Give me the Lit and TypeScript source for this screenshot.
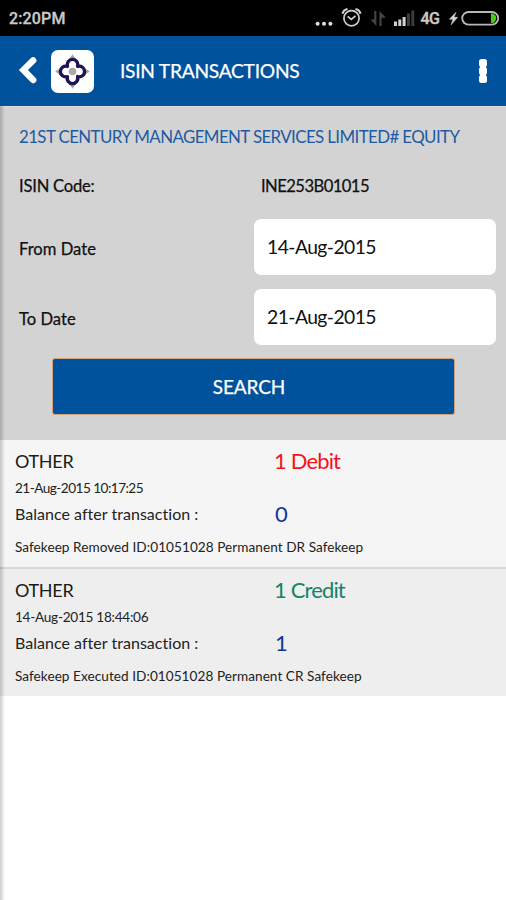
import { LitElement, html, css, svg } from "lit";
import { customElement, property } from "lit/decorators.js";

interface Transaction {
  kind: string;
  time: string;
  amount: string;
  tone: "debit" | "credit";
  balance: string;
  note: string;
}

const TRANSACTIONS: Transaction[] = [
  { kind: "OTHER", time: "21-Aug-2015 10:17:25", amount: "1 Debit", tone: "debit", balance: "0", note: "Safekeep Removed ID:01051028 Permanent DR Safekeep" },
  { kind: "OTHER", time: "14-Aug-2015 18:44:06", amount: "1 Credit", tone: "credit", balance: "1", note: "Safekeep Executed ID:01051028 Permanent CR Safekeep" },
];

@customElement("status-bar")
class StatusBar extends LitElement {
  static styles = css`
    :host { display: flex; height: 36px; background: #000; color: #c9c9c9; font: 500 16px/36px Roboto, sans-serif; }
    .clock { padding: 1px 0 0 9px; flex: 1; letter-spacing: 0.15px; -webkit-text-stroke: 0.3px #c9c9c9; }
    svg { display: block; width: 200px; height: 36px; }
    .net { font: 500 16px Roboto, sans-serif; fill: #c9c9c9; stroke: #c9c9c9; stroke-width: 0.4px; }
  `;
  render() {
    return html`<span class="clock">2:20PM</span>
      <svg viewBox="306 0 200 36">
        ${svg`
        <g fill="#e0e0e0"><circle cx="317.6" cy="23.8" r="2"/><circle cx="324" cy="23.8" r="2"/><circle cx="330.4" cy="23.8" r="2"/></g>
        <g fill="none" stroke="#cfcfcf" stroke-width="1.7">
          <circle cx="351.5" cy="18.3" r="7.6"/><path d="M347.7 16.3l3.6 3.1 4.2-3.6"/>
          <path d="M342.5 13.8q1-4 5-4.8M360.5 13.8q-1-4-5-4.8" stroke-width="2.2"/>
        </g>
        <g fill="#424242"><path d="M374.2 11h2.2v15l-6-6.4h3.8zM379.4 26h2.2v-8.2h4.4l-6.6-6.8z"/></g>
        <g fill="#d2d2d2"><rect x="394" y="21.5" width="3" height="4.5"/><rect x="398.3" y="19.5" width="3" height="6.5"/><rect x="402.6" y="17" width="3" height="9"/></g>
        <g fill="#3c3c3c"><rect x="407" y="13.5" width="3" height="12.5"/><rect x="411.3" y="10.5" width="3" height="15.5"/></g>
        <path d="M456 12.3l-6.6 6.9h3.6l-1.9 5.6 6.6-7.5h-3.7z" fill="#d6d6d6" stroke="#d6d6d6" stroke-width="0.5"/>
        <rect x="462.2" y="12" width="36" height="12.6" rx="6.3" fill="none" stroke="#b8b8b8" stroke-width="1.8"/>
        <path d="M491 13.6h2.2q3 1.8 3 4.7t-3 4.7h-2.2z" fill="#43cf13"/>
        `}
        <text class="net" x="420.5" y="24.4" textLength="19.5">4G</text>
      </svg>`;
  }
}

@customElement("title-bar")
class TitleBar extends LitElement {
  static styles = css`
    :host { display: flex; align-items: center; height: 70px; background: #00529c; box-sizing: border-box; border-bottom: 1px solid #174f86; padding-left: 18px; }
    .back { width: 20px; height: 30px; }
    .logo { width: 43px; height: 43px; margin-left: 12.5px; margin-top: 1px; }
    .title { flex: 1; margin-left: 26.5px; color: #fff; font-size: 19.2px; line-height: 24px; letter-spacing: -0.26px; -webkit-text-stroke: 0.25px #fff; white-space: nowrap; padding-top: 1px; }
    .more { width: 10px; height: 28px; margin-right: 18px; }
  `;
  render() {
    return html`
      <svg class="back" viewBox="18 56 20 30"><path d="M33.2 60.4L23.4 70 33.2 80" fill="none" stroke="#fff" stroke-width="6.4" stroke-linecap="round" stroke-linejoin="miter"/></svg>
      <svg class="logo" viewBox="0 0 43 43">
        <rect width="43" height="43" rx="7" fill="#fff"/>
        <path d="M21.5 4.2l4 6h-8zM21.5 38.8l4-6h-8zM4.2 21.5l6-4v8zM38.8 21.5l-6-4v8z" fill="#a3a39f"/>
        <path d="M16.4 16.4C15.4 12.6 18 9.4 21.5 9.4S27.6 12.6 26.6 16.4C30.4 15.4 33.6 18 33.6 21.5S30.4 27.6 26.6 26.6C27.6 30.4 25 33.6 21.5 33.6S15.4 30.4 16.4 26.6C12.6 27.6 9.4 25 9.4 21.5S12.6 15.4 16.4 16.4Z" fill="#fff" stroke="#1d1458" stroke-width="3.4" stroke-linejoin="round"/>
        <circle cx="21.5" cy="21.5" r="3.8" fill="#aaaaa8"/>
      </svg>
      <span class="title">ISIN TRANSACTIONS</span>
      <svg class="more" viewBox="0 0 10 28"><g fill="#fff"><rect x="1" y="2" width="8" height="8" rx="2.5"/><rect x="1" y="10" width="8" height="8" rx="2.5"/><rect x="1" y="18" width="8" height="8" rx="2.5"/><rect x="2.2" y="7" width="5.6" height="14"/></g></svg>`;
  }
}

@customElement("search-panel")
class SearchPanel extends LitElement {
  static styles = css`
    :host { display: flex; flex-direction: column; height: 334px; box-sizing: border-box; background: #d3d3d3; border-top: 1px solid #dedfd9; color: #111; }
    .company { padding: 18px 0 0 19px; font-size: 16.9px; line-height: 24px; color: #1c5ba3; letter-spacing: -0.61px; white-space: nowrap; }
    .row { display: grid; grid-template-columns: 235px 242px; padding-left: 19px; align-items: center; font-size: 16.6px; line-height: 24px; }
    .label, .code { -webkit-text-stroke: 0.25px #111; white-space: nowrap; }
    .isin { margin-top: 25px; height: 24px; }
    .isin .label { letter-spacing: -0.22px; }
    .code { padding-left: 7px; letter-spacing: -0.55px; }
    .from { margin-top: 21px; }
    .to { margin-top: 14px; }
    .date .label { padding-top: 4px; }
    .field { height: 56px; border-radius: 7px; background: #fff; box-sizing: border-box; padding-left: 13px; font-size: 19.3px; line-height: 56px; letter-spacing: -0.55px; }
    .search { margin: 13px 0 0 52px; width: 403px; height: 57px; box-sizing: border-box; border: 1.5px solid #cda27c; border-radius: 3px; background: #00529c; color: #fff; font: inherit; font-size: 19px; line-height: 24px; padding: 1px 9px 0 0; -webkit-text-stroke: 0.25px #fff; }
    .caption { letter-spacing: -0.1px; }
  `;
  render() {
    return html`
      <div class="company">21ST CENTURY MANAGEMENT SERVICES LIMITED# EQUITY</div>
      <div class="row isin"><span class="label">ISIN Code:</span><span class="code">INE253B01015</span></div>
      <div class="row date from"><span class="label">From Date</span><span class="field">14-Aug-2015</span></div>
      <div class="row date to"><span class="label">To Date</span><span class="field">21-Aug-2015</span></div>
      <button class="search"><span class="caption">SEARCH</span></button>`;
  }
}

@customElement("transaction-row")
class TransactionRow extends LitElement {
  @property({ attribute: false }) item!: Transaction;
  static styles = css`
    :host { display: block; color: #222; white-space: nowrap; font-variant-ligatures: none; }
    .top { display: grid; grid-template-columns: 259px 1fr; padding-left: 15px; align-items: center; }
    .kind { font-size: 18px; color: #1a1a1a; letter-spacing: -0.3px; }
    .first { height: 32px; padding-top: 5px; }
    .time { padding-left: 15px; font-size: 13.6px; line-height: 20px; letter-spacing: -0.53px; padding-top: 1px; }
    .time.credit-time { letter-spacing: -0.27px; }
    .bal { height: 30px; }
    .label { font-size: 16px; letter-spacing: 0.03px; }
    .amount, .balance { font-size: 22px; line-height: 28px; }
    .amount { letter-spacing: -0.85px; }
    .debit { color: #f5131b; }
    .credit { color: #148468; }
    .balance { color: #0f3695; padding: 1px 0 0 1px; }
    .note { padding: 9px 0 0 15px; font-size: 13.6px; line-height: 20px; letter-spacing: 0.05px; }
  `;
  render() {
    const t = this.item;
    return html`
      <div class="top first"><span class="kind">${t.kind}</span><span class="amount ${t.tone}">${t.amount}</span></div>
      <div class="time ${t.tone}-time">${t.time}</div>
      <div class="top bal"><span class="label">Balance after transaction :</span><span class="balance">${t.balance}</span></div>
      <div class="note">${t.note}</div>`;
  }
}

@customElement("app-root")
class AppRoot extends LitElement {
  static styles = css`
    :host { display: block; width: 506px; height: 900px; background: #fff; overflow: hidden; font-family: Lato, "Open Sans", sans-serif; }
    .body { position: relative; height: 794px; }
    .edge { position: absolute; left: 0; top: 0; width: 5px; height: 100%; background: linear-gradient(90deg, rgba(0,0,0,.2), rgba(0,0,0,0)); }
    .entry { display: block; height: 127px; background: #f5f5f5; }
    .entry + .entry { height: 129px; box-sizing: border-box; background: #eee; border-top: 2px solid #d8d8d8; }
  `;
  render() {
    return html`
      <status-bar></status-bar>
      <title-bar></title-bar>
      <div class="body">
        <search-panel></search-panel>
        ${TRANSACTIONS.map((t) => html`<transaction-row class="entry" .item=${t}></transaction-row>`)}
        <div class="edge"></div>
      </div>`;
  }
}
